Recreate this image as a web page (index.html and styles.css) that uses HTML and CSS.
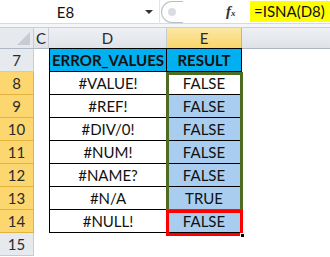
FILE: index.html
```html
<!DOCTYPE html>
<html>
<head>
<meta charset="utf-8">
<link rel="stylesheet" href="styles.css">
</head>
<body>
<div class="fbar">
  <div class="namebox"><span class="nb-text">E8</span><span class="nb-arrow"></span></div>
  <div class="knob"><span class="knob-dot"></span></div>
  <div class="fx">f<sub>x</sub></div>
  <div class="formula"><span class="hl">=ISNA(D8)</span></div>
</div>
<div class="sep"></div>
<div class="sheet">
  <div class="grid">
    <div class="corner"><span class="tri"></span></div>
    <div class="ch">C</div>
    <div class="ch">D</div>
    <div class="ch sel">E</div>
    <div class="ch rest"></div>

    <div class="rh">7</div><div class="c"></div><div class="t hd">ERROR_VALUES</div><div class="t hd">RESULT</div><div class="c"></div>
    <div class="rh on">8</div><div class="c"></div><div class="t">#VALUE!</div><div class="t">FALSE</div><div class="c"></div>
    <div class="rh on">9</div><div class="c"></div><div class="t">#REF!</div><div class="t bl">FALSE</div><div class="c"></div>
    <div class="rh on">10</div><div class="c"></div><div class="t">#DIV/0!</div><div class="t bl">FALSE</div><div class="c"></div>
    <div class="rh on">11</div><div class="c"></div><div class="t">#NUM!</div><div class="t bl">FALSE</div><div class="c"></div>
    <div class="rh on">12</div><div class="c"></div><div class="t">#NAME?</div><div class="t bl">FALSE</div><div class="c"></div>
    <div class="rh on">13</div><div class="c"></div><div class="t">#N/A</div><div class="t bl">TRUE</div><div class="c"></div>
    <div class="rh on">14</div><div class="c"></div><div class="t">#NULL!</div><div class="t bl">FALSE</div><div class="c"></div>
    <div class="rh">15</div><div class="c"></div><div class="c"></div><div class="c"></div><div class="c"></div>
  </div>
  <div class="green"></div>
  <div class="red"></div>
  <div class="handle"></div>
</div>
</body>
</html>
```
FILE: styles.css
```css
* { box-sizing: border-box; }
html, body { margin: 0; padding: 0; background: #fff; }
body { width: 330px; height: 257px; overflow: hidden; font-family: Lato, "Open Sans", sans-serif; }

.fbar { height: 24px; display: flex; align-items: center; background: #fff; border-bottom: 1px solid #d5dae2; }
.namebox { width: 160px; height: 24px; display: flex; align-items: center; position: relative; border-right: 1px solid #e2e6ec; }
.nb-text { flex: 1; text-align: center; font-size: 15px; color: #111; padding-right: 14px; }
.nb-arrow { width: 0; height: 0; border-left: 4px solid transparent; border-right: 4px solid transparent; border-top: 4px solid #333; margin-right: 6px; }
.knob { width: 22px; height: 22px; border: 1px solid #b8bec8; border-right: none; border-radius: 11px 0 0 11px; margin-left: 1px; display: flex; align-items: center; justify-content: center; }
.knob-dot { width: 8px; height: 8px; border-radius: 50%; background: #d9dde3; margin-left: -2px; }
.fx { margin-left: 43px; width: 20px; font-family: "Liberation Serif", serif; font-style: italic; font-weight: bold; font-size: 15px; color: #333; }
.fx sub { font-size: 9px; vertical-align: baseline; }
.formula { margin-left: 4px; height: 24px; display: flex; align-items: center; }
.hl { background: #ffff00; height: 21px; line-height: 21px; padding: 0 5px 0 4px; font-size: 15px; color: #111; }

.sep { height: 4px; border-bottom: 1px solid #c9cfd8; background: #f4f6f9; margin-bottom: 0; }

.sheet { position: relative; }
.grid { display: grid; grid-template-columns: 34px 15px 118px 75px 1fr; grid-template-rows: 21px repeat(9, 23px); }
.corner { background: #e6e9ee; border-right: 1px solid #c6ccd5; border-bottom: 1px solid #aeb6c2; position: relative; }
.tri { position: absolute; right: 3px; bottom: 3px; width: 0; height: 0; border-left: 13px solid transparent; border-bottom: 13px solid #c8ccd2; }
.ch { background: linear-gradient(#eef0f4, #dfe3e8); border-right: 1px solid #c6ccd5; border-bottom: 1px solid #aeb6c2; display: flex; align-items: center; justify-content: center; font-size: 15px; color: #2b2b2b; }
.ch.sel { background: linear-gradient(#fce8a6, #f9d56a); border-bottom-color: #e2b33e; border-right-color: #e2b33e; }
.ch.rest { border-right: none; }
.rh { background: #e6e9ee; border-right: 1px solid #c6ccd5; border-bottom: 1px solid #c6ccd5; display: flex; align-items: center; justify-content: center; font-size: 15px; color: #2b2b2b; }
.rh.on { background: #fcd770; border-right-color: #e2b33e; border-bottom-color: #e2b33e; }
.c { background: #fff; }
.t { display: flex; align-items: center; justify-content: center; font-size: 15px; color: #111; background: #fff; border-right: 1px solid #000; border-bottom: 1px solid #000; }
.grid > .c + .t { border-left: 1px solid #000; }
.t.hd { background: #00b0f0; font-weight: bold; border-top: 1px solid #000; margin-top: -1px; }
.t.bl { background: #a9cdef; }

.green { position: absolute; left: 166px; top: 44px; width: 77px; height: 140px; border: 3px solid #4f6a23; }
.red { position: absolute; left: 166px; top: 182px; width: 77px; height: 26px; border: 3px solid #ff0000; }
.handle { position: absolute; left: 240px; top: 205px; width: 5px; height: 5px; background: #000; border: 1px solid #fff; }
```
